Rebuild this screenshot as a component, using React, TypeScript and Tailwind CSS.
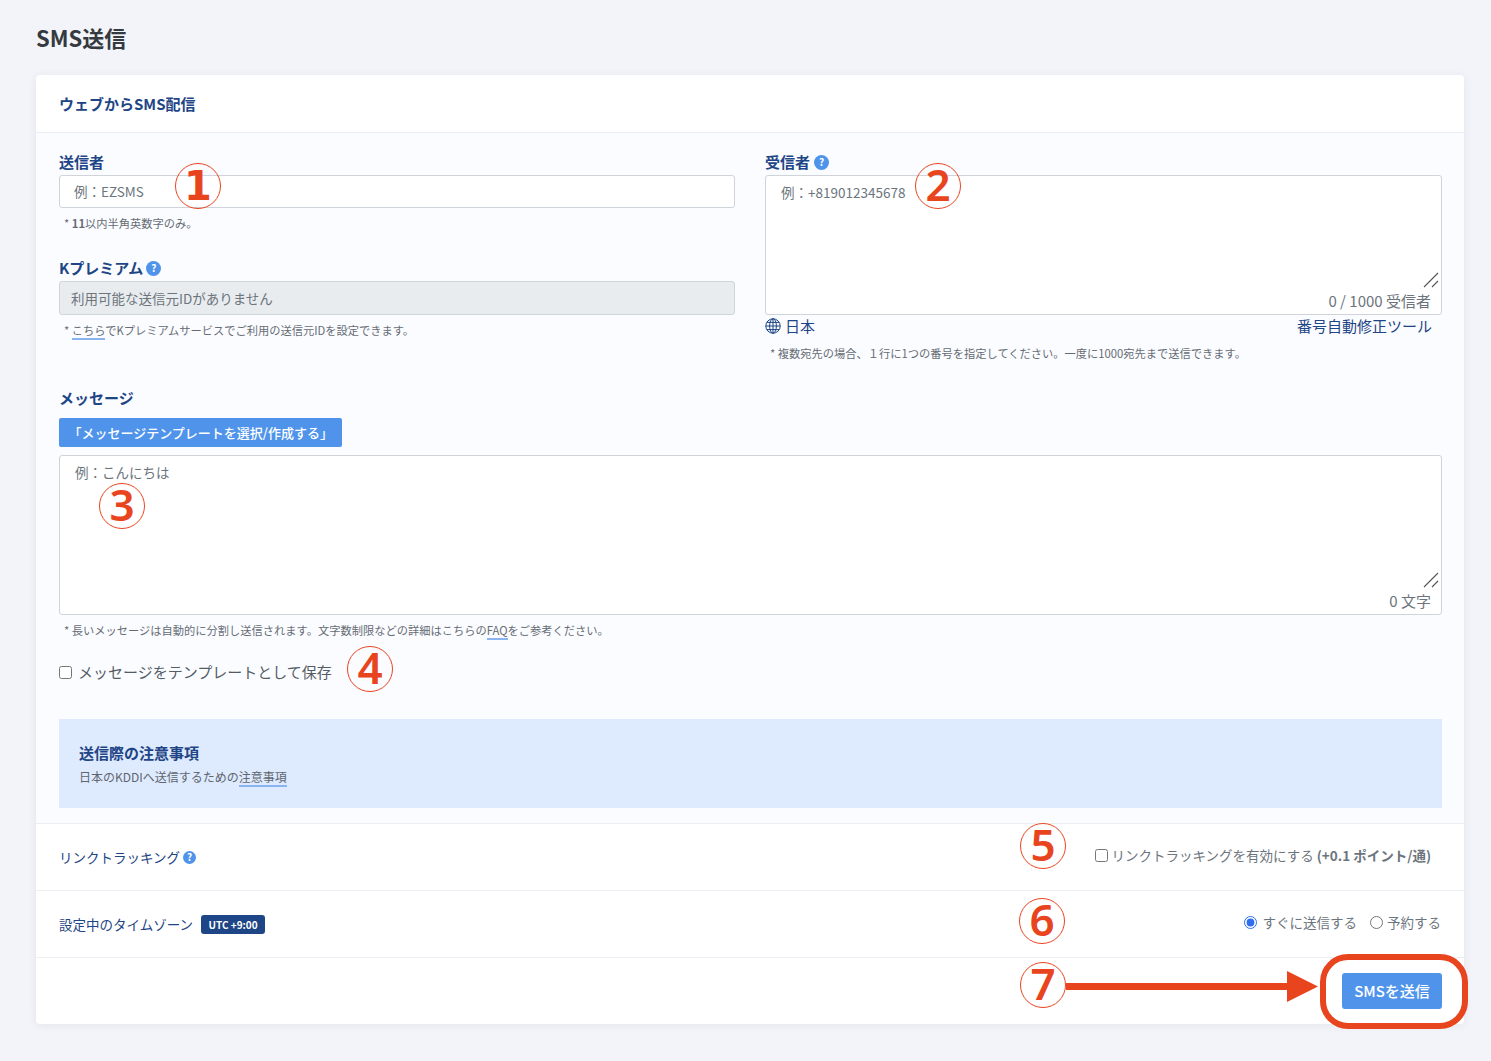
import React from 'react';

const fontStack = { fontFamily: '"Noto Sans CJK JP", "Noto Sans", sans-serif' };

const HelpIcon = ({ className = 'h-[15px] w-[15px]' }: { className?: string }) => (
  <span className={`inline-flex items-center justify-center rounded-full bg-[#4f94ea] text-[10px] font-bold leading-none text-white ${className}`}>
    ?
  </span>
);

const GlobeIcon = () => (
  <svg className="h-[16px] w-[16px] text-[#1e4585]" viewBox="0 0 16 16" fill="none" stroke="currentColor" strokeWidth="1">
    <circle cx="8" cy="8" r="7.2" />
    <ellipse cx="8" cy="8" rx="3.4" ry="7.2" />
    <path d="M8 .8v14.4M.8 8h14.4M1.8 4.4h12.4M1.8 11.6h12.4" />
  </svg>
);

const ResizeGrip = () => (
  <svg className="absolute bottom-[26px] right-[2px] h-[16px] w-[16px] text-[#555]" viewBox="0 0 16 16" stroke="currentColor" strokeWidth="1.1">
    <path d="M1 15 15 1M9 15l6-6" />
  </svg>
);

const Marker = ({ n, className, digit }: { n: string; className: string; digit?: string }) => (
  <span
    className={`absolute flex h-[46px] w-[46px] items-center justify-center rounded-full border-[1.5px] border-[#e8451f] pb-[4px] font-semibold leading-none text-[#e8451f] ${className}`}
    style={{ fontFamily: digit ?? '"Noto Sans", sans-serif' }}
  >
    {n}
  </span>
);

const Link = ({ children }: { children: React.ReactNode }) => (
  <span className="border-b-2 border-[#8ab4f0] leading-[13px]">{children}</span>
);

export default function App() {
  return (
    <div className="relative h-[1061px] overflow-hidden bg-[#f3f4f9] px-[36px] pt-[20px]" style={fontStack}>
      <h1 className="h-[34px] text-[22px] font-bold leading-[34px] text-[#343a40]">SMS送信</h1>

      <div className="mt-[21px] w-[1428px] overflow-hidden rounded-[4px] bg-white shadow-[0_1px_8px_rgba(40,50,80,0.08)]">
        <div className="flex h-[58px] items-center border-b border-[#eceef3] px-[23px] pt-[1px]">
          <h2 className="text-[15px] font-bold text-[#1e4585]">ウェブからSMS配信</h2>
        </div>

        <div className="h-[691px] border-b border-[#eceef3] bg-[#fbfcff] pl-[23px] pr-[22px] pt-[20px]">
          <div className="grid grid-cols-[676px_677px] gap-x-[30px]">
            <div>
              <label className="block h-[22px] text-[15px] font-bold leading-[18px] text-[#1e4585]">送信者</label>
              <div className="flex h-[33px] items-center rounded-[3px] border border-[#ced4da] bg-white pl-[14px] text-[13.5px] text-[#6c757d]">
                例：EZSMS
              </div>
              <p className="mt-[7px] h-[16px] pl-[5px] text-[11.25px] leading-[16px] text-[#666c75]">
                * <b>11</b>以内半角英数字のみ。
              </p>
              <label className="mt-[29px] flex h-[21px] items-center gap-[3px] pb-[5px] text-[15px] font-bold text-[#1e4585]">
                Kプレミアム <HelpIcon />
              </label>
              <div className="flex h-[34px] items-center rounded-[3px] border border-[#ced4da] bg-[#e9ecef] pl-[11px] text-[13.5px] text-[#6c757d]">
                利用可能な送信元IDがありません
              </div>
              <p className="mt-[7px] h-[16px] pl-[5px] text-[11.25px] leading-[16px] text-[#666c75]">
                * <Link>こちら</Link>でKプレミアムサービスでご利用の送信元IDを設定できます。
              </p>
            </div>

            <div>
              <label className="flex h-[22px] items-center gap-[4px] pb-[4px] text-[15px] font-bold text-[#1e4585]">
                受信者 <HelpIcon />
              </label>
              <div className="relative h-[140px] rounded-[3px] border border-[#ced4da] bg-white pl-[15px] pt-[6px] text-[13.5px] leading-[20px] text-[#6c757d]">
                例：+819012345678
                <ResizeGrip />
                <span className="absolute bottom-[3px] right-[10px] text-[15px] leading-[20px]">0 / 1000 受信者</span>
              </div>
              <div className="flex h-[22px] items-center justify-between pr-[10px] text-[15px] text-[#1e4585]">
                <span className="flex items-center gap-[4px]">
                  <GlobeIcon />
                  日本
                </span>
                <span>番号自動修正ツール</span>
              </div>
              <p className="mt-[8px] h-[16px] pl-[5px] text-[11.25px] leading-[16px] text-[#666c75]">
                * 複数宛先の場合、１行に1つの番号を指定してください。一度に1000宛先まで送信できます。
              </p>
            </div>
          </div>

          <label className="mt-[25px] block h-[24px] text-[15px] font-bold leading-[24px] text-[#1e4585]">メッセージ</label>
          <button className="mt-[8px] block h-[29px] rounded-[2px] bg-[#4f94ea] px-[9.5px] text-[13px] font-medium text-white">
            「メッセージテンプレートを選択/作成する」
          </button>
          <div className="relative mt-[8px] h-[160px] rounded-[3px] border border-[#ced4da] bg-white pl-[15px] pt-[6px] text-[13.5px] leading-[20px] text-[#6c757d]">
            例：こんにちは
            <ResizeGrip />
            <span className="absolute bottom-[3px] right-[10px] text-[15px] leading-[20px]">0 文字</span>
          </div>
          <p className="mt-[7px] h-[16px] pl-[5px] text-[11.25px] leading-[16px] text-[#666c75]">
            * 長いメッセージは自動的に分割し送信されます。文字数制限などの詳細はこちらの<Link>FAQ</Link>をご参考ください。
          </p>
          <label className="mt-[24px] flex h-[20px] items-center gap-[6px] text-[15px] text-[#555c64]">
            <input type="checkbox" className="m-0 h-[13px] w-[13px]" />
            メッセージをテンプレートとして保存
          </label>
          <div className="mt-[37px] h-[89px] bg-[#deeafd] px-[20px] pt-[24px]">
            <h3 className="h-[20px] text-[15px] font-bold leading-[20px] text-[#1e4585]">送信際の注意事項</h3>
            <p className="mt-[6px] h-[16px] text-[12px] leading-[16px] text-[#5f6670]">
              日本のKDDIへ送信するための<Link>注意事項</Link>
            </p>
          </div>
        </div>

        <div className="flex h-[67px] items-center justify-between border-b border-[#eceef3] pl-[23px] pr-[33px]">
          <span className="flex items-center gap-[3px] text-[13.5px] text-[#1e4585]">
            リンクトラッキング <HelpIcon className="h-[13px] w-[13px]" />
          </span>
          <label className="mb-[3px] flex items-center gap-[3px] text-[13.5px] text-[#6c757d]">
            <input type="checkbox" className="m-0 h-[13px] w-[13px]" />
            <span>
              リンクトラッキングを有効にする <b>(+0.1 ポイント/通)</b>
            </span>
          </label>
        </div>

        <div className="flex h-[67px] items-center justify-between border-b border-[#eceef3] pl-[23px] pr-[23px]">
          <span className="flex items-center gap-[8px] text-[13.5px] text-[#1e4585]">
            設定中のタイムゾーン
            <span className="flex h-[19px] items-center rounded-[3px] bg-[#1e4585] px-[7.5px] text-[10px] font-bold text-white">
              UTC +9:00
            </span>
          </span>
          <div className="mb-[3px] flex items-center gap-[13px] text-[13.5px] text-[#6c757d]">
            <label className="flex items-center gap-[6px]">
              <input type="radio" name="send" defaultChecked className="m-0 h-[13px] w-[13px] accent-[#2f6fed]" />
              すぐに送信する
            </label>
            <label className="flex items-center gap-[4px]">
              <input type="radio" name="send" className="m-0 h-[13px] w-[13px]" />
              予約する
            </label>
          </div>
        </div>

        <div className="flex h-[66px] items-start justify-end pr-[22px] pt-[15px]">
          <button className="h-[36px] w-[100px] rounded-[3px] bg-[#4f94ea] text-[15px] font-medium text-white">SMSを送信</button>
        </div>
      </div>

      <Marker n="1" digit='"DejaVu Sans", sans-serif' className="left-[175px] top-[163px] pt-[4px] text-[40px]" />
      <Marker n="2" className="left-[915px] top-[163px] text-[44px]" />
      <Marker n="3" className="left-[99px] top-[483px] text-[44px]" />
      <Marker n="4" className="left-[347px] top-[646px] text-[44px]" />
      <Marker n="5" className="left-[1020px] top-[823px] text-[44px]" />
      <Marker n="6" className="left-[1019px] top-[898px] text-[44px]" />
      <Marker n="7" className="left-[1020px] top-[962px] text-[44px]" />

      <svg className="absolute left-[1064px] top-[968px] h-[36px] w-[256px]" viewBox="0 0 256 36" fill="#e8451f">
        <path d="M2 15h222v7H2z" />
        <path d="M223 3l31 15.500-31 15.500z" />
      </svg>
      <span className="absolute left-[1320px] top-[954px] h-[75px] w-[148px] rounded-[28px] border-[6px] border-[#e8451f]" />
    </div>
  );
}
